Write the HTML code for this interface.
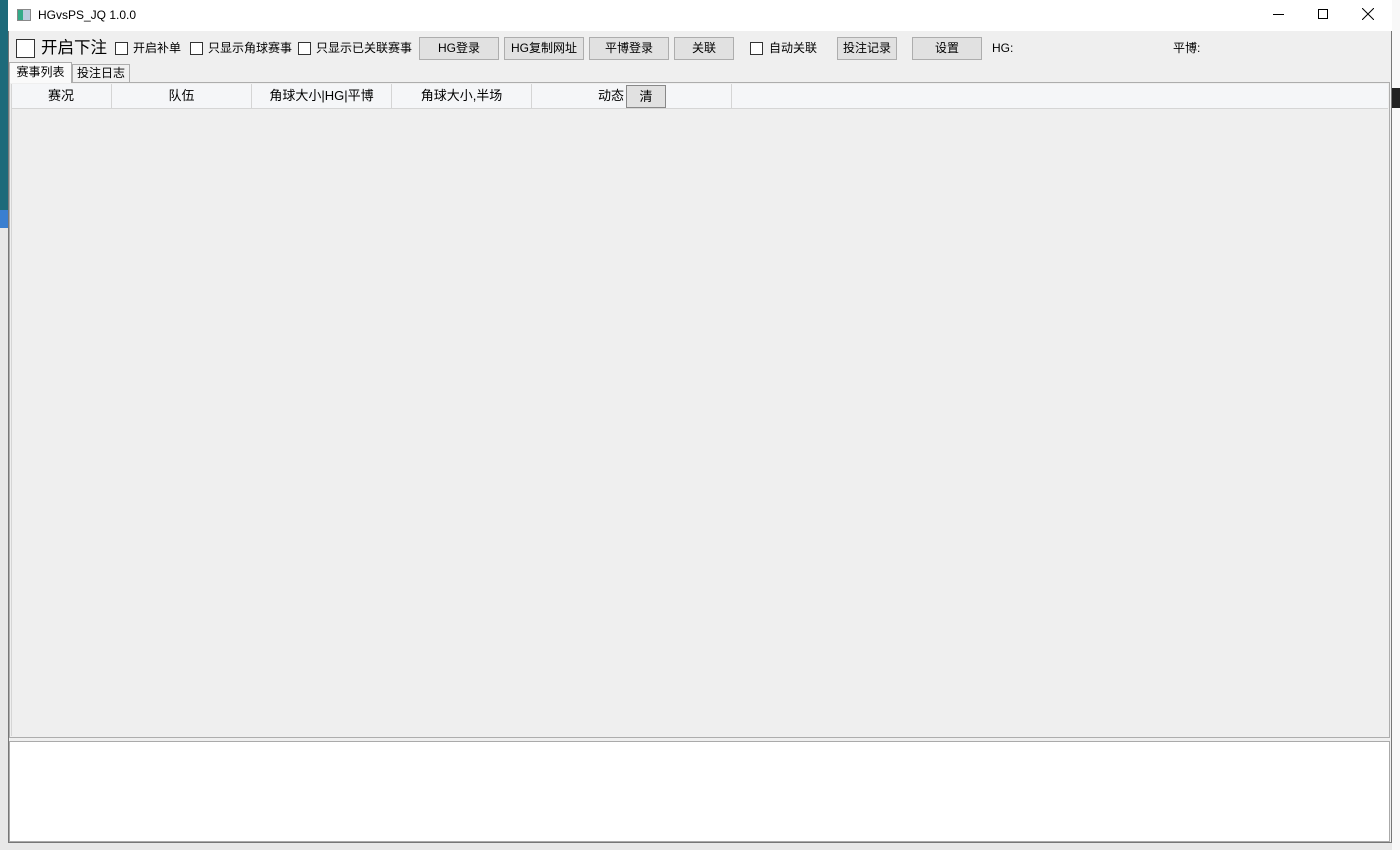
<!DOCTYPE html>
<html><head><meta charset="utf-8"><style>
*{margin:0;padding:0;box-sizing:border-box}
body{width:1400px;height:850px;position:relative;overflow:hidden;background:#e8e8e8;font-family:"Liberation Sans","Microsoft YaHei","Noto Sans CJK SC",sans-serif;font-size:12px;color:#000}
.a{position:absolute}
.btn{position:absolute;height:23px;top:37px;background:#e1e1e1;border:1px solid #adadad;text-align:center;line-height:21px;font-size:12px}
.cb{position:absolute;width:13px;height:13px;border:1px solid #333;background:#fff;top:42px}
.t{position:absolute;top:40px;line-height:16px;font-size:12px;white-space:nowrap}
.hc{position:absolute;top:84px;height:24px;line-height:24px;text-align:center;font-size:13px;border-right:1px solid #d5d5d5}
</style></head><body>
<div class="a" style="left:1392px;top:0;width:8px;height:850px;background:#f8f8f8"></div>
<div class="a" style="left:0;top:0;width:8px;height:210px;background:#1d6a7a"></div>
<div class="a" style="left:0;top:210px;width:8px;height:18px;background:#3a7fd0"></div>
<div class="a" style="left:1392px;top:88px;width:8px;height:20px;background:#222"></div>
<div class="a" style="left:8px;top:0;width:1384px;height:843px;background:#efefef;border:1px solid #777;border-top:none"></div>
<div class="a" style="left:8px;top:0;width:1384px;height:31px;background:#fff"></div>
<div class="a" style="left:17px;top:9px;width:14px;height:12px;border:1px solid #888;background:linear-gradient(90deg,#3a8 0 40%,#bcd 40%)"></div>
<div class="a" style="left:38px;top:8px;font-size:12px">HGvsPS_JQ 1.0.0</div>
<div class="a" style="left:1273px;top:14px;width:11px;height:1px;background:#000"></div>
<div class="a" style="left:1318px;top:9px;width:10px;height:10px;border:1px solid #000"></div>
<svg class="a" style="left:1362px;top:8px" width="12" height="12"><path d="M0 0L12 12M12 0L0 12" stroke="#000" stroke-width="1"/></svg>

<div class="a" style="left:16px;top:39px;width:19px;height:19px;border:1px solid #333;background:#fff"></div>
<div class="a" style="left:41px;top:37px;font-size:16.5px;line-height:22px">开启下注</div>
<div class="cb" style="left:115px"></div><div class="t" style="left:133px">开启补单</div>
<div class="cb" style="left:190px"></div><div class="t" style="left:208px">只显示角球赛事</div>
<div class="cb" style="left:298px"></div><div class="t" style="left:316px">只显示已关联赛事</div>
<div class="btn" style="left:419px;width:80px">HG登录</div>
<div class="btn" style="left:504px;width:80px">HG复制网址</div>
<div class="btn" style="left:589px;width:80px">平博登录</div>
<div class="btn" style="left:674px;width:60px">关联</div>
<div class="cb" style="left:750px"></div><div class="t" style="left:769px">自动关联</div>
<div class="btn" style="left:837px;width:60px">投注记录</div>
<div class="btn" style="left:912px;width:70px">设置</div>
<div class="t" style="left:992px">HG:</div>
<div class="t" style="left:1173px">平博:</div>

<div class="a" style="left:9px;top:82px;width:1381px;height:656px;border:1px solid #adadad;background:#efefef"></div>
<div class="a" style="left:72px;top:64px;width:58px;height:19px;border:1px solid #adadad;background:#f0f0f0;text-align:center;line-height:17px">投注日志</div>
<div class="a" style="left:9px;top:62px;width:63px;height:21px;border:1px solid #adadad;border-bottom:none;background:#fafafa;text-align:center;line-height:19px">赛事列表</div>
<div class="a" style="left:11px;top:84px;width:1377px;height:25px;background:#f5f6f8;border-bottom:1px solid #d5d5d5"></div>
<div class="a" style="left:11px;top:84px;width:1px;height:652px;background:#d5d5d5"></div>
<div class="hc" style="left:11px;width:101px">赛况</div>
<div class="hc" style="left:112px;width:140px">队伍</div>
<div class="hc" style="left:252px;width:140px">角球大小|HG|平博</div>
<div class="hc" style="left:392px;width:140px">角球大小,半场</div>
<div class="hc" style="left:532px;width:200px;text-align:left;padding-left:66px">动态</div>
<div class="a" style="left:626px;top:85px;width:40px;height:23px;background:#e1e1e1;border:1px solid #888;text-align:center;line-height:21px;font-size:13px">清</div>

<div class="a" style="left:9px;top:741px;width:1381px;height:101px;background:#fff;border:1px solid #aaa"></div>
</body></html>
